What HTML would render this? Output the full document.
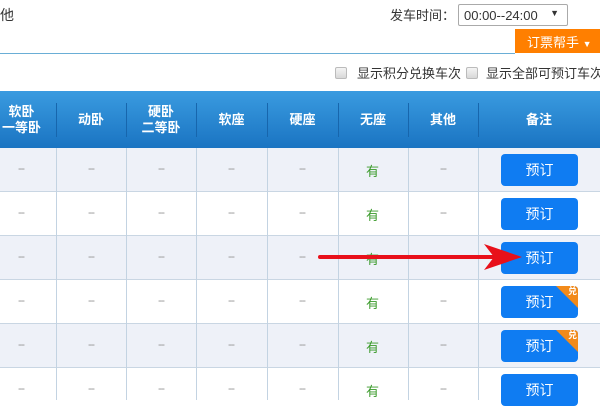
<!DOCTYPE html>
<html><head><meta charset="utf-8"><style>
*{margin:0;padding:0;box-sizing:border-box}
body{width:600px;height:400px;overflow:hidden;background:#fff;font-family:"Liberation Sans","Noto Sans CJK SC",sans-serif;position:relative;color:#333;font-size:13px}
.a{position:absolute}
.hdr{left:0;top:91px;width:600px;height:57px;background:linear-gradient(#3a9be0,#1a74c2)}
.hc{position:absolute;top:0;height:57px;display:flex;align-items:center;justify-content:center;color:#fff;font-weight:bold;font-size:13px;line-height:16px;text-align:center}
.hs{position:absolute;top:12px;width:1px;height:34px;background:#1766ad}
.row{position:absolute;left:0;width:600px;height:44px;border-bottom:1px solid #c9d6e3}
.g{background:#eef1f8}
.vl{position:absolute;top:148px;width:1px;height:252px;background:#c3d3e2}
.d{position:absolute;width:20px;text-align:center;color:#999;font-size:12px;letter-spacing:-1px}
.y{position:absolute;color:#3a9a2a;font-size:13px}
.btn{position:absolute;left:501px;width:77px;height:32px;background:#0f7cf2;border-radius:4px;color:#fff;font-size:14px;display:flex;align-items:center;justify-content:center;overflow:hidden}
.tri{position:absolute;right:0;top:0;width:0;height:0;border-top:22px solid #f28a1a;border-left:22px solid transparent}
.dui{position:absolute;right:1px;top:0;font-size:9px;color:#fff;font-weight:bold;line-height:11px}
.cb{position:absolute;width:12px;height:12px;border:1px solid #bbb;border-radius:2px;background:linear-gradient(#f4f4f4,#d8d8d8)}
</style></head><body>
<div class="a" style="left:0;top:5px;font-size:14px">他</div>
<div class="a" style="left:390px;top:5px;font-size:13px">发车时间：</div>
<div class="a" style="left:458px;top:4px;width:110px;height:22px;border:1px solid #aaa;border-radius:2px;font-size:13px;padding:3px 0 0 5px">00:00--24:00<span style="position:absolute;right:8px;top:3px;font-size:9px">▼</span></div>
<div class="a" style="left:515px;top:29px;width:85px;height:24px;background:#ff7f00;color:#fff;font-size:13px;padding:3px 0 0 12px">订票帮手 <span style="font-size:9px">▼</span></div>
<div class="a" style="left:0;top:53px;width:515px;height:1px;background:#6aaed6"></div>
<div class="cb" style="left:335px;top:67px"></div>
<div class="a" style="left:357px;top:63px;font-size:13px">显示积分兑换车次</div>
<div class="cb" style="left:466px;top:67px"></div>
<div class="a" style="left:486px;top:63px;font-size:13px;white-space:nowrap">显示全部可预订车次</div>
<div class="a hdr">
<div class="hc" style="left:0;width:56px;justify-content:flex-start;padding-left:2px">软卧<br>一等卧</div>
<div class="hc" style="left:56px;width:70px">动卧</div>
<div class="hc" style="left:126px;width:70px">硬卧<br>二等卧</div>
<div class="hc" style="left:196px;width:71px">软座</div>
<div class="hc" style="left:267px;width:71px">硬座</div>
<div class="hc" style="left:338px;width:70px">无座</div>
<div class="hc" style="left:408px;width:70px">其他</div>
<div class="hc" style="left:478px;width:122px">备注</div>
<div class="hs" style="left:56px"></div><div class="hs" style="left:126px"></div><div class="hs" style="left:196px"></div><div class="hs" style="left:267px"></div><div class="hs" style="left:338px"></div><div class="hs" style="left:408px"></div><div class="hs" style="left:478px"></div>
</div>
<div class="row g" style="top:148px"></div>
<div class="row" style="top:192px"></div>
<div class="row g" style="top:236px"></div>
<div class="row" style="top:280px"></div>
<div class="row g" style="top:324px"></div>
<div class="row" style="top:368px;border:none"></div>
<div class="vl" style="left:56px"></div><div class="vl" style="left:126px"></div><div class="vl" style="left:196px"></div><div class="vl" style="left:267px"></div><div class="vl" style="left:338px"></div><div class="vl" style="left:408px"></div><div class="vl" style="left:478px"></div>
<div id="cells"></div>
<script>
var xs=[21,91,161,231,302,443],h='';
for(var r=0;r<6;r++){var t=148+r*44;
xs.forEach(function(x){h+='<div class="d" style="left:'+(x-10)+'px;top:'+(t+13)+'px">--</div>'});
h+='<div class="y" style="left:366px;top:'+(t+13)+'px">有</div>';
h+='<div class="btn" style="top:'+(t+6)+'px">预订'+((r==3||r==4)?'<div class="tri"></div><div class="dui">兑</div>':'')+'</div>';}
document.getElementById('cells').innerHTML=h;
</script>
<svg class="a" style="left:0;top:0" width="600" height="400">
<line x1="320" y1="257" x2="495" y2="257" stroke="#e8101a" stroke-width="4" stroke-linecap="round"/>
<path d="M484 244 L522 257 L484 270 L494 257 Z" fill="#e8101a"/>
</svg>
</body></html>
